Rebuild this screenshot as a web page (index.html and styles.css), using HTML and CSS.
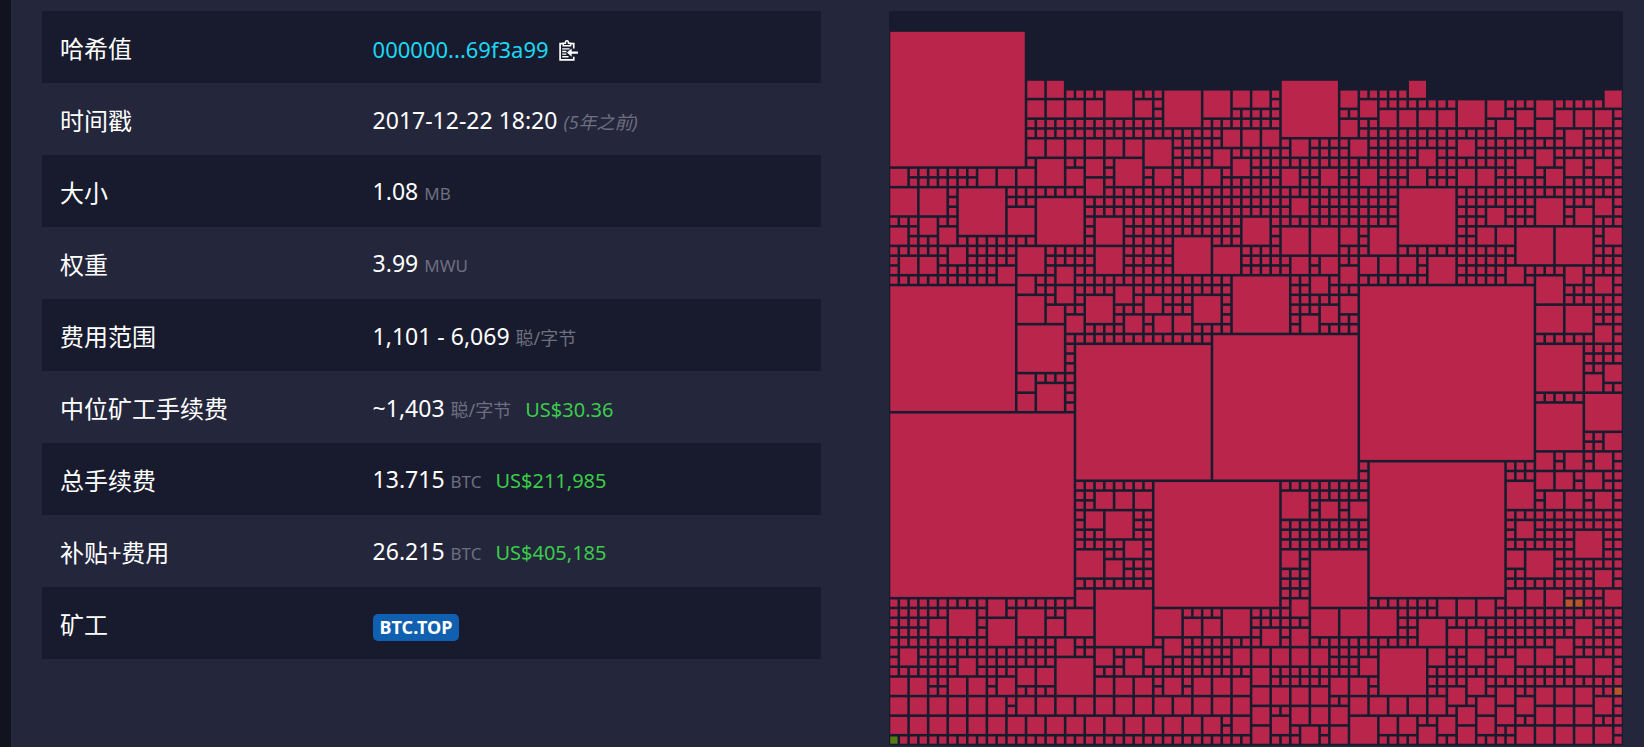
FILE: index.html
```
<!DOCTYPE html>
<html lang="zh">
<head>
    <meta charset="UTF-8">
    <title>区块</title>
    <link rel="stylesheet" href="styles.css">
</head>
<body>
    <main class="box">
        <table class="info">
            <tbody>
                <tr>
                    <th scope="row">哈希值</th>
                    <td>
                        <a class="hash" href="#">000000...69f3a99</a>
                        <button class="copy" type="button" aria-label="复制">
                            <svg viewBox="0 0 18 20" width="19" height="21">
                                <path d="M4 3.500H1V19H14V16M14 8V3.500H11" fill="none" stroke="#fff" stroke-width="1.600"/>
                                <path d="M4 5.500V3H6Q6 0.700 7.500 0.700T9 3H11V5.500Z" fill="none" stroke="#fff" stroke-width="1.400"/>
                                <path d="M3 8.500H10M3 11H7M3 13.500H7M3 16H9" stroke="#fff" stroke-width="1.300"/>
                                <path d="M7.500 12L12 8V11H18V13H12V16Z" fill="#fff"/>
                            </svg>
                        </button>
                    </td>
                </tr>
                <tr>
                    <th scope="row">时间戳</th>
                    <td>2017-12-22 18:20 <i class="unit zh">(5年之前)</i></td>
                </tr>
                <tr>
                    <th scope="row">大小</th>
                    <td>1.08 <span class="unit">MB</span></td>
                </tr>
                <tr>
                    <th scope="row">权重</th>
                    <td>3.99 <span class="unit">MWU</span></td>
                </tr>
                <tr>
                    <th scope="row">费用范围</th>
                    <td>1,101 - 6,069 <span class="unit zh">聪/字节</span></td>
                </tr>
                <tr>
                    <th scope="row">中位矿工手续费</th>
                    <td>~1,403 <span class="unit zh">聪/字节</span> <span class="fiat">US$30.36</span></td>
                </tr>
                <tr>
                    <th scope="row">总手续费</th>
                    <td>13.715 <span class="unit">BTC</span> <span class="fiat">US$211,985</span></td>
                </tr>
                <tr>
                    <th scope="row">补贴+费用</th>
                    <td>26.215 <span class="unit">BTC</span> <span class="fiat">US$405,185</span></td>
                </tr>
                <tr>
                    <th scope="row">矿工</th>
                    <td><a class="badge" href="#">BTC.TOP</a></td>
                </tr>
            </tbody>
        </table>
        <svg id="blocks" class="blocks" viewBox="0 0 750 750"></svg>
    </main>
    <script src="blocks.js"></script>
</body>
</html>
```
FILE: styles.css
```
* {
    box-sizing: border-box;
}
body {
    margin: 0;
    background: #24263c;
    color: #fff;
    font-family: "Noto Sans", "Noto Sans CJK SC", sans-serif;
    font-size: 23px;
    line-height: 36px;
}
a {
    color: #1bd8f4;
    text-decoration: none;
}
.box {
    display: grid;
    grid-template-columns: 779fr 734fr;
    gap: 68px;
    align-items: start;
    min-height: 100vh;
    padding: 11px 21px 2px 31px;
    border-left: 11px solid #11131f;
}
.info {
    width: 100%;
    border-collapse: collapse;
}
.info tr:nth-child(odd) {
    background: #181b2d;
}
.info th,
.info td {
    height: 72px;
    padding: 2px 18px 0;
    text-align: left;
    font-weight: normal;
    white-space: nowrap;
}
.info th {
    width: 40%;
    font-size: 24px;
    font-family: "Noto Sans CJK SC", sans-serif;
}
.info td {
    padding-top: 3px;
    padding-left: 19px;
}
.info .hash {
    font-size: 22px;
}
.info .unit {
    color: #6d6f7f;
    font-size: 17px;
}
.info .zh {
    font-size: 18px;
}
.fiat {
    margin-left: 8px;
    color: #3bcc49;
    font-size: 20px;
}
.copy {
    margin: 0 0 0 4px;
    padding: 0;
    border: 0;
    background: none;
    line-height: 0;
    vertical-align: -3px;
    cursor: pointer;
}
.badge {
    display: inline-block;
    padding: 0 7px;
    border-radius: 5px;
    background: #105fb0;
    color: #fff;
    font-size: 18px;
    font-weight: bold;
    line-height: 27px;
    vertical-align: middle;
}
.blocks {
    display: block;
    width: 100%;
    background: #181b2d;
}
```
FILE: blocks.js
```
var SIZE = 75;   // cells per side
var CELL = 10;
var PAD = 1.3;
var svg = document.getElementById("blocks");

// row: [column, side] of every transaction wider than one cell
var big = {
    2: [[0,14]],
    7: [[14,2],[16,2],[40,6],[53,2]],
    8: [[22,3],[28,4],[32,3],[35,2],[37,2],[46,2],[73,2]],
    9: [[14,2],[16,2],[18,2],[20,2],[25,2],[48,2],[58,3],[61,2],[66,2]],
    10: [[50,2],[52,2],[54,2],[56,2],[64,2],[68,2],[70,2],[72,2]],
    11: [[46,2],[62,2],[66,2]],
    12: [[34,2],[36,2],[38,2],[69,2]],
    13: [[14,2],[16,2],[18,2],[20,2],[22,2],[24,2],[26,3],[41,2],[47,2],[58,2]],
    14: [[33,2],[54,2],[66,2]],
    15: [[15,3],[20,2],[23,3],[35,2],[64,2],[69,2],[72,2]],
    16: [[0,2],[9,2],[11,2],[13,2],[18,2],[27,2],[30,2],[32,2],[40,2],[44,2],[48,2],[53,2],[58,2],[60,2],[67,2]],
    17: [[20,2]],
    18: [[0,3],[3,3],[7,5],[52,6]],
    19: [[15,5],[41,2],[66,3],[72,2]],
    20: [[12,3],[61,2],[70,2]],
    21: [[3,2],[21,3],[36,3]],
    22: [[0,2],[5,2],[40,3],[43,3],[46,2],[49,3],[60,2],[62,2],[64,4],[68,4],[73,2]],
    23: [[29,4]],
    24: [[6,2],[13,3],[21,3],[33,3]],
    25: [[1,2],[3,2],[41,2],[44,2],[48,2],[50,2],[52,2],[55,3]],
    26: [[11,2],[17,2],[46,2],[63,2],[69,2]],
    27: [[13,2],[35,6],[43,2],[66,3],[72,2]],
    28: [[0,13],[17,2],[23,2],[48,18]],
    29: [[13,3],[20,3],[26,2],[31,3],[46,2]],
    30: [[16,2],[44,2],[66,3],[69,3]],
    31: [[18,2],[24,2],[27,2],[29,2],[42,2]],
    32: [[13,5],[72,2]],
    33: [[33,15]],
    34: [[19,14],[66,5]],
    36: [[73,2]],
    37: [[13,2],[71,2]],
    38: [[15,3]],
    39: [[13,2],[71,4]],
    40: [[66,5]],
    41: [[0,19]],
    43: [[73,2]],
    45: [[66,2],[69,2],[72,2]],
    46: [[49,14]],
    47: [[66,2],[68,2],[71,2]],
    48: [[27,13],[63,3]],
    49: [[21,2],[23,2],[25,2],[40,3],[67,2],[69,2],[72,2]],
    50: [[44,2],[47,2]],
    51: [[20,2],[22,3]],
    52: [[64,2]],
    53: [[70,3]],
    54: [[24,2]],
    55: [[19,3],[40,2],[43,6],[63,2],[65,3]],
    56: [[22,2]],
    57: [[72,2]],
    59: [[19,2],[21,6],[63,2],[65,2],[67,2],[73,2]],
    60: [[10,2],[41,2],[56,2],[58,2],[60,2]],
    61: [[6,3],[13,3],[18,3],[27,3],[34,3],[43,3],[46,3],[49,3]],
    62: [[4,2],[10,3],[16,2],[30,2],[32,2],[54,3],[70,2]],
    63: [[38,2],[41,2],[57,2],[59,2]],
    64: [[17,2],[28,2],[68,2]],
    65: [[1,2],[21,2],[26,2],[35,2],[37,2],[39,2],[41,2],[43,2],[50,5],[55,2],[59,2],[64,2],[66,2]],
    66: [[7,2],[17,4],[24,2],[48,2],[62,2],[70,2],[72,2]],
    67: [[13,2],[15,2],[37,2]],
    68: [[0,2],[2,2],[6,2],[8,2],[11,2],[21,2],[23,2],[25,2],[28,2],[31,2],[33,2],[35,2],[45,2],[47,2],[59,2]],
    69: [[37,2],[39,2],[41,2],[43,2],[57,2],[62,2],[66,2],[68,2],[70,2]],
    70: [[0,2],[2,2],[4,2],[6,2],[8,2],[10,2],[13,2],[15,2],[17,2],[19,2],[21,2],[23,2],[25,2],[27,2],[29,2],[31,2],[33,2],[35,2],[47,2],[49,2],[51,2],[53,2],[55,2],[60,2],[64,2],[72,2]],
    71: [[37,2],[41,2],[43,2],[45,2],[58,2],[62,2],[66,2],[68,2],[70,2]],
    72: [[0,2],[2,2],[4,2],[6,2],[8,2],[10,2],[12,2],[14,2],[16,2],[18,2],[20,2],[22,2],[24,2],[26,2],[28,2],[30,2],[32,2],[35,2],[39,2],[47,3],[50,2],[52,2],[56,2],[60,2]],
    73: [[37,2],[42,2],[45,2],[54,2],[58,2],[64,2],[66,2],[68,2],[70,2],[72,2]]
};

// cheaper transactions have their own colour
var colors = {
    "0,74": "#557d12",
    "69,60": "#b9542d",
    "70,60": "#b9542d",
    "74,69": "#b9542d"
};
var used = {};

function draw(col, row, side){
    var rect = document.createElementNS("http://www.w3.org/2000/svg", "rect");
    rect.setAttribute("x", col*CELL + PAD);
    rect.setAttribute("y", row*CELL + PAD);
    rect.setAttribute("width", side*CELL - 2*PAD);
    rect.setAttribute("height", side*CELL - 2*PAD);
    rect.setAttribute("fill", colors[col + "," + row] || "#b9254b");
    svg.appendChild(rect);
    for(var i=0; i<side; i++){
        for(var j=0; j<side; j++){
            used[(col+i) + "," + (row+j)] = true;
        }
    }
}

for(var row in big){
    for(var i=0; i<big[row].length; i++){
        draw(big[row][i][0], Number(row), big[row][i][1]);
    }
}

// everything left under the top edge is one cell
for(var x=0; x<SIZE; x++){
    var first = x < 53 ? 8 : 9;
    for(var y=first; y<SIZE; y++){
        if(!used[x + "," + y]){
            draw(x, y, 1);
        }
    }
}
```
